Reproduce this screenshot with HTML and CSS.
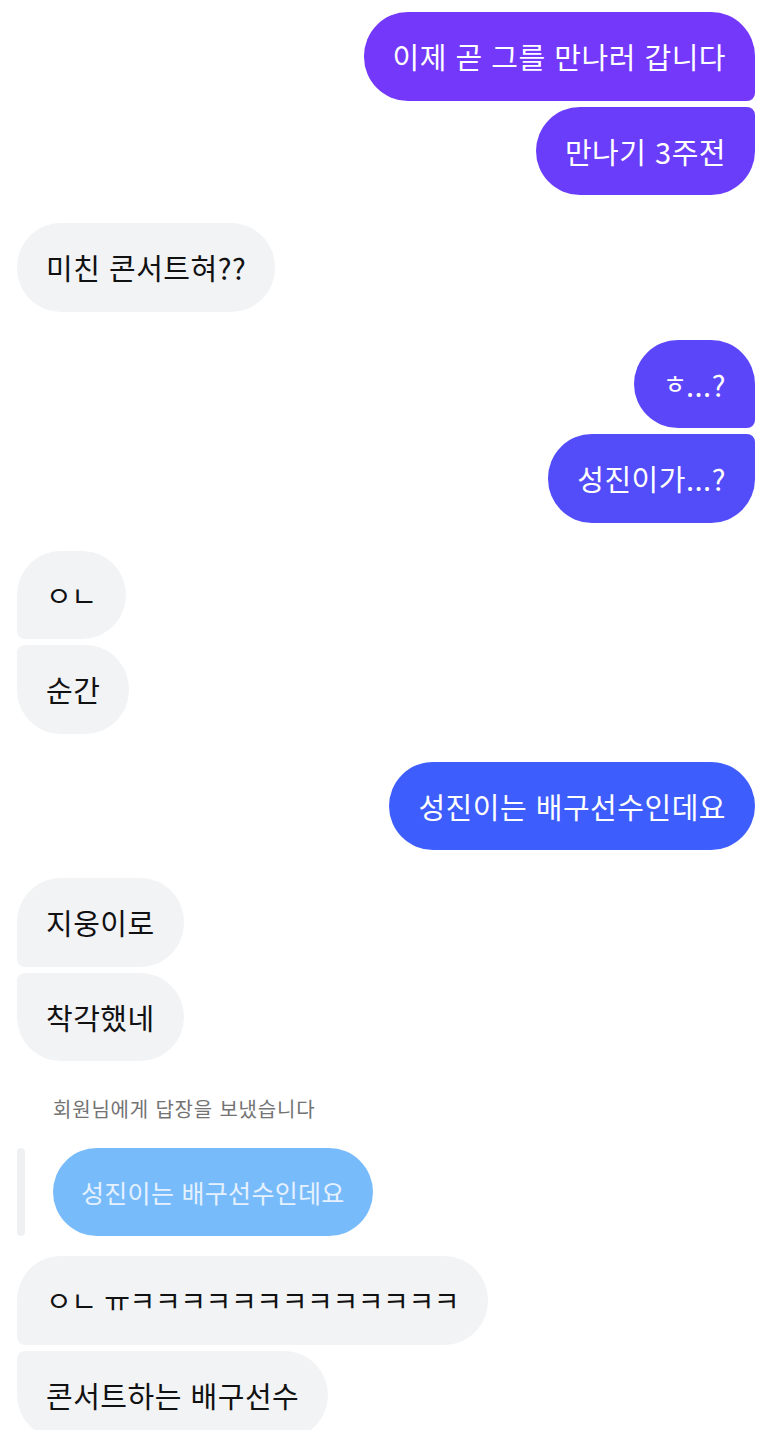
FILE: index.html
```html
<!DOCTYPE html>
<html lang="ko">
<head>
<meta charset="utf-8">
<title>Chat</title>
<link rel="stylesheet" href="styles.css">
</head>
<body>
<div class="chat">
  <div class="group out">
    <div class="bubble first c1">이제 곧 그를 만나러 갑니다</div>
    <div class="bubble last c2">만나기 3주전</div>
  </div>
  <div class="group in">
    <div class="bubble">미친 콘서트혀??</div>
  </div>
  <div class="group out">
    <div class="bubble first c3"><span class="small-jamo">ㅎ</span>...?</div>
    <div class="bubble last c4">성진이가...?</div>
  </div>
  <div class="group in">
    <div class="bubble first jamo">ㅇㄴ</div>
    <div class="bubble last">순간</div>
  </div>
  <div class="group out">
    <div class="bubble c5">성진이는 배구선수인데요</div>
  </div>
  <div class="group in">
    <div class="bubble first">지웅이로</div>
    <div class="bubble last">착각했네</div>
  </div>
  <div class="reply">
    <div class="reply-label">회원님에게 답장을 보냈습니다</div>
    <div class="reply-row">
      <div class="reply-bar"></div>
      <div class="reply-bubble">성진이는 배구선수인데요</div>
    </div>
  </div>
  <div class="group in after-reply">
    <div class="bubble first jamo">ㅇㄴ ㅠㅋㅋㅋㅋㅋㅋㅋㅋㅋㅋㅋㅋㅋ</div>
    <div class="bubble last">콘서트하는 배구선수</div>
  </div>
</div>
</body>
</html>
```
FILE: styles.css
```css
html, body {
  margin: 0;
  padding: 0;
  background: #ffffff;
}
body {
  font-family: "Noto Sans CJK KR", "Noto Sans", sans-serif;
  overflow: hidden;
}
.chat {
  display: flex;
  flex-direction: column;
  padding: 12px 18px 0 17px;
  gap: 28px;
}
.group {
  display: flex;
  flex-direction: column;
  gap: 6px;
}
.group.out { align-items: flex-end; }
.group.in { align-items: flex-start; }
.bubble {
  font-size: 29px;
  height: 36.5px;
  line-height: 36.5px;
  padding: 26px 29px;
  border-radius: 44px;
  white-space: nowrap;
  letter-spacing: 0.5px;
}
.bubble.jamo {
  font-size: 28px;
  letter-spacing: -0.4px;
}
.small-jamo {
  font-size: 26px;
  line-height: 1;
  letter-spacing: -1px;
  vertical-align: 3px;
}
.in .bubble {
  background: #f2f3f5;
  color: #111111;
}
.out .bubble { color: #ffffff; }
.out .bubble.first { border-bottom-right-radius: 8px; }
.out .bubble.last { border-top-right-radius: 8px; }
.in .bubble.first { border-bottom-left-radius: 8px; }
.in .bubble.last { border-top-left-radius: 8px; }
.c1 { background: #7438fb; }
.c2 { background: #6a3dfb; }
.c3 { background: #5b46fa; }
.c4 { background: #534cf9; }
.c5 { background: #3d5dfd; }
.reply {
  display: flex;
  flex-direction: column;
  margin-top: 8px;
}
.reply-label {
  font-size: 20px;
  line-height: 24px;
  letter-spacing: 0.8px;
  color: #737373;
  padding-left: 36px;
}
.reply-row {
  display: flex;
  align-items: stretch;
  margin-top: 27px;
}
.reply-bar {
  width: 8px;
  border-radius: 4px;
  background: #eff0f2;
}
.reply-bubble {
  margin-left: 28px;
  background: #78bbfa;
  color: #e6f1ff;
  font-size: 25px;
  line-height: 34px;
  letter-spacing: 0.3px;
  padding: 27px 28px;
  border-radius: 44px;
  white-space: nowrap;
}
.after-reply { margin-top: -8px; }
```
